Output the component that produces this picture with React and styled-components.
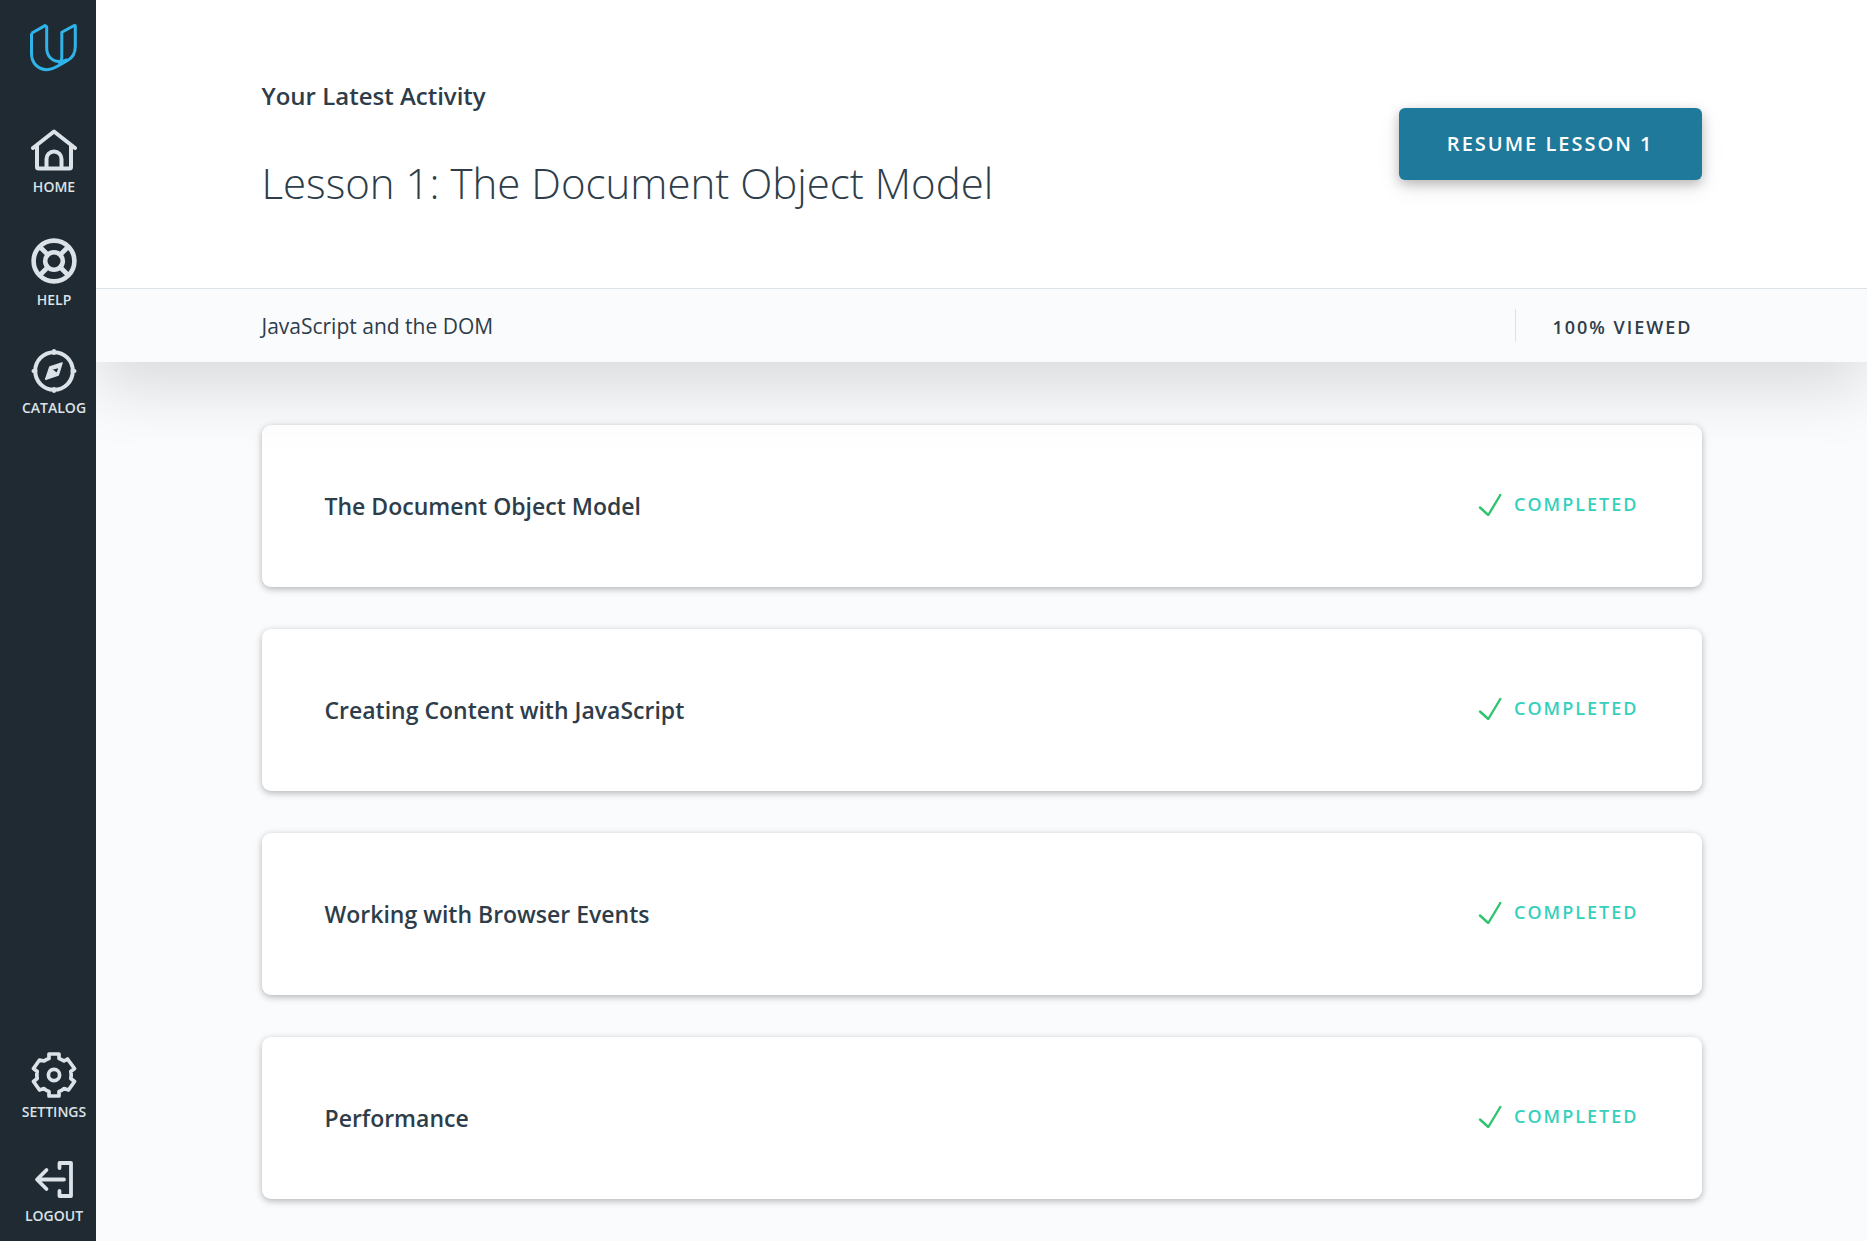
import React from "react";
import styled, { createGlobalStyle } from "styled-components";

const GlobalStyle = createGlobalStyle`
  *, *::before, *::after { box-sizing: border-box; }
  body {
    margin: 0;
    background: #fafbfd;
    color: #2e3d49;
    font-family: "Open Sans", "Noto Sans", sans-serif;
  }
  h1, h2, p, ul { margin: 0; padding: 0; }
  ul { list-style: none; }
`;

const Page = styled.div`
  display: flex;
  min-height: 100vh;
`;

const Sidebar = styled.nav`
  position: sticky;
  top: 0;
  z-index: 2;
  flex: 0 0 96px;
  display: flex;
  flex-direction: column;
  justify-content: space-between;
  height: 100vh;
  padding: 24px 0 15px 12px;
  background: #1f2a32;
`;

const SideGroup = styled.div`
  display: flex;
  flex-direction: column;
  align-items: center;
  gap: 39px;
`;

const LogoLink = styled.a`
  display: block;
  height: 66px;
`;

const SideLink = styled.a`
  display: flex;
  flex-direction: column;
  align-items: center;
  gap: 4px;
  color: #dbe2e8;
  font-size: 14px;
  font-weight: 600;
  line-height: 20px;
  text-decoration: none;
  text-transform: uppercase;

  svg { display: block; }
`;

const Main = styled.main`
  flex: 1;
  min-width: 0;
`;

const Hero = styled.header`
  position: relative;
  z-index: 1;
  background: #fff;
  box-shadow: 0 26px 60px rgba(0, 0, 0, 0.13);
`;

const Container = styled.div`
  width: 100%;
  max-width: 1440px;
  margin: 0 auto;
`;

const HeroRow = styled(Container)`
  display: flex;
  align-items: center;
  justify-content: space-between;
  min-height: 288px;
`;

const HeroText = styled.div`
  display: flex;
  flex-direction: column;
  gap: 41px;
  padding-top: 1px;
`;

const Eyebrow = styled.p`
  font-size: 24px;
  font-weight: 600;
  line-height: 36px;
`;

const Title = styled.h1`
  font-size: 42px;
  font-weight: 300;
  line-height: 56px;
`;

const ResumeButton = styled.button`
  height: 72px;
  padding: 0 48px 2px;
  border: 0;
  border-radius: 6px;
  background: #1e799b;
  box-shadow: 0 4px 12px rgba(0, 0, 0, 0.24), 0 8px 24px rgba(0, 0, 0, 0.08);
  color: #fff;
  font-family: inherit;
  font-size: 20px;
  font-weight: 600;
  letter-spacing: 2px;
  text-transform: uppercase;
  cursor: pointer;
`;

const SubBar = styled.div`
  border-top: 1px solid #dbe2e8;
  background: #fafbfd;
`;

const SubRow = styled(Container)`
  display: flex;
  align-items: center;
  justify-content: space-between;
  min-height: 73px;
`;

const Course = styled.p`
  font-size: 21px;
  line-height: 32px;
`;

const Viewed = styled.p`
  padding: 3px 9px 0 36px;
  border-left: 1px solid #dbe2e8;
  font-size: 18px;
  font-weight: 600;
  line-height: 30px;
  letter-spacing: 2px;
  text-transform: uppercase;
`;

const LessonList = styled.ul`
  display: flex;
  flex-direction: column;
  gap: 42px;
  width: 100%;
  max-width: 1440px;
  margin: 0 auto;
  padding: 63px 0 42px;
`;

const Card = styled.li`
  display: flex;
  align-items: center;
  justify-content: space-between;
  min-height: 162px;
  padding: 0 63px;
  border-radius: 9px;
  background: #fff;
  box-shadow: 0 2px 7px rgba(0, 0, 0, 0.29);
`;

const CardTitle = styled.h2`
  font-size: 23px;
  font-weight: 600;
  line-height: 36px;
`;

const Status = styled.p`
  display: flex;
  align-items: center;
  gap: 12px;
  padding-bottom: 4px;
  color: #35d0bd;
  font-size: 18px;
  font-weight: 600;
  line-height: 24px;
  letter-spacing: 2px;
  text-transform: uppercase;
`;

const stroke = {
  fill: "none",
  stroke: "currentColor",
  strokeWidth: 4,
  strokeLinecap: "round",
  strokeLinejoin: "round",
};

const Logo = () => (
  <svg width="48" height="48" viewBox="0 0 48 48" fill="none" stroke="#2fb3e8" strokeWidth="3" strokeLinejoin="round">
    <path d="M1.5 9.3V29.5C1.5 39 8 45.7 17 45.7C22 45.7 26.500 43 31 40.300L37.500 36.500C43 33.500 45.300 28.500 45.300 22.500V1.800L44.200 1.500L31.800 8.300V33C31.800 36 30.800 38.500 28.500 40" />
    <path d="M1.500 9.300L15 1.600L16.700 2.700V24C16.700 32 22 37.500 29.500 37.500C32.500 37.500 35 37 37.500 35.500" />
  </svg>
);

const HomeIcon = () => (
  <svg width="46" height="44" viewBox="0 0 46 44" {...stroke}>
    <path d="M2 19L23 2.500L44 19M6 17V38Q6 39.500 7.500 39.500H38.500Q40 39.500 40 38V17M15.500 39.500V30a7.500 7.500 0 0 1 15 0V39.500" />
  </svg>
);

const HelpIcon = () => (
  <svg width="46" height="50" viewBox="0 0 46 50" {...stroke} strokeWidth="4.600">
    <circle cx="23" cy="25" r="20.400" />
    <circle cx="23" cy="25" r="8.800" />
    <path d="M8.500 10.500l8 8M37.500 10.500l-8 8M8.500 39.500l8 -8M37.500 39.500l-8 -8" strokeLinecap="butt" />
  </svg>
);

const CatalogIcon = () => (
  <svg width="46" height="45" viewBox="0 0 46 45" {...stroke}>
    <circle cx="23" cy="22" r="18.800" strokeWidth="4" />
    <path d="M23 2v2M23 40v2M2.500 22h2M41.500 22h2" />
    <path
      d="M31 14L18.800 18L14.700 30.300L27.300 26ZM20.600 20.300L28.500 18L26 24.800Z"
      fill="currentColor"
      fillRule="evenodd"
      strokeWidth="1.500"
    />
  </svg>
);

const SettingsIcon = () => (
  <svg width="46" height="48" viewBox="0 0 46 48" {...stroke} strokeWidth="3.700">
    <circle cx="23" cy="25" r="5.600" />
    <path d="M18 4H28V8.500Q30.500 9.300 33 11L36.500 9L43.500 18.500L39.800 21.500Q40.500 25 39.800 28.500L43.500 31.500L37.500 40L33 38.500Q31 40.500 28 41.500V46H18V41.500Q15 40.500 13 38.500L8.500 40L2.500 31.500L6.200 28.500Q5.500 25 6.200 21.500L2.500 18.500L8.500 10L13 11Q15 9.300 18 8.500Z" />
  </svg>
);

const LogoutIcon = () => (
  <svg width="46" height="41" viewBox="0 0 46 41" {...stroke} strokeWidth="3.800">
    <path d="M28.500 7V2H40V35H28.500V30M33 18.500H6.500M15.500 9L6 18.500L15.500 28" />
  </svg>
);

const CheckIcon = () => (
  <svg width="24" height="24" viewBox="0 0 24 24" fill="none" stroke="#2fc46d" strokeWidth="2.400" strokeLinecap="round" strokeLinejoin="round" aria-hidden="true">
    <path d="M2 15.500L10.300 23L22.300 3" />
  </svg>
);

const topLinks = [
  { label: "Home", Icon: HomeIcon },
  { label: "Help", Icon: HelpIcon },
  { label: "Catalog", Icon: CatalogIcon },
];

const bottomLinks = [
  { label: "Settings", Icon: SettingsIcon },
  { label: "Logout", Icon: LogoutIcon },
];

const lessons = [
  "The Document Object Model",
  "Creating Content with JavaScript",
  "Working with Browser Events",
  "Performance",
];

const renderLink = ({ label, Icon }) => (
  <SideLink href="#" key={label}>
    <Icon />
    {label}
  </SideLink>
);

export default function App() {
  return (
    <>
      <GlobalStyle />
      <Page>
        <Sidebar>
          <SideGroup>
            <LogoLink href="#" aria-label="Udacity">
              <Logo />
            </LogoLink>
            {topLinks.map(renderLink)}
          </SideGroup>
          <SideGroup>{bottomLinks.map(renderLink)}</SideGroup>
        </Sidebar>
        <Main>
          <Hero>
            <HeroRow>
              <HeroText>
                <Eyebrow>Your Latest Activity</Eyebrow>
                <Title>Lesson 1: The Document Object Model</Title>
              </HeroText>
              <ResumeButton type="button">Resume Lesson 1</ResumeButton>
            </HeroRow>
            <SubBar>
              <SubRow>
                <Course>JavaScript and the DOM</Course>
                <Viewed>100% Viewed</Viewed>
              </SubRow>
            </SubBar>
          </Hero>
          <LessonList>
            {lessons.map((name) => (
              <Card key={name}>
                <CardTitle>{name}</CardTitle>
                <Status>
                  <CheckIcon />
                  Completed
                </Status>
              </Card>
            ))}
          </LessonList>
        </Main>
      </Page>
    </>
  );
}
